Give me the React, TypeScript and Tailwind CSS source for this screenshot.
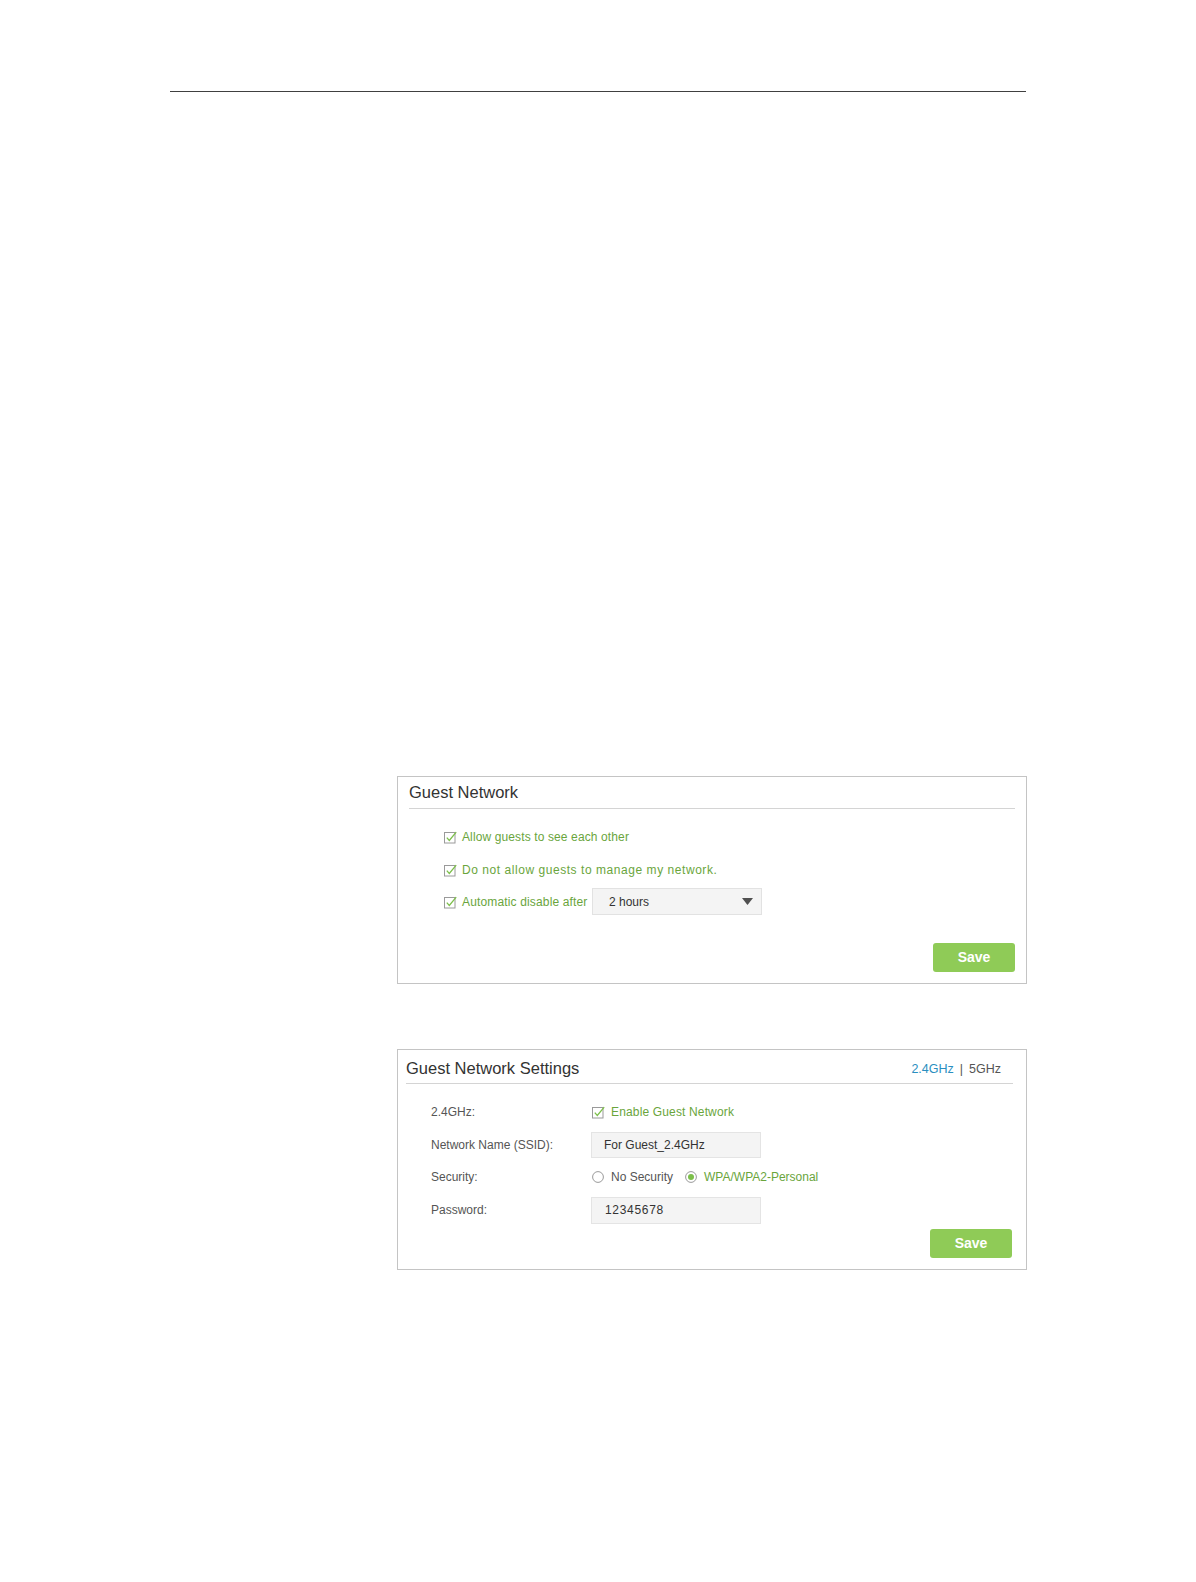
import React from 'react';

const green = 'text-[#6aa53c]';

function CheckIcon() {
  return (
    <svg width="14" height="14" viewBox="0 0 14 14" className="shrink-0">
      <rect x="0.5" y="2.5" width="10.5" height="10.5" fill="white" stroke="#9a9a9a" strokeWidth="1" />
      <polyline points="2.8,7.6 5.3,10.4 12.2,2.2" fill="none" stroke="#7cbf4a" strokeWidth="1.3" />
    </svg>
  );
}

function Radio({ checked }: { checked?: boolean }) {
  return (
    <svg width="12" height="12" viewBox="0 0 12 12" className="shrink-0">
      <circle cx="6" cy="6" r="5.4" fill="white" stroke="#9a9a9a" strokeWidth="1" />
      {checked && <circle cx="6" cy="6" r="3" fill="#7cbf4a" />}
    </svg>
  );
}

function SaveButton() {
  return (
    <button className="w-[82px] h-[29px] rounded-[3px] bg-[#8fcb57] text-white text-[14px] font-semibold">
      Save
    </button>
  );
}

export default function App() {
  return (
    <div className="w-[1196px] h-[1582px] bg-white pt-[91px] font-['Liberation_Sans',Arial,sans-serif]">
      <div className="ml-[170px] w-[856px] h-px bg-[#404040]" />

      {/* Guest Network */}
      <div className="mt-[684px] ml-[397px] w-[630px] h-[208px] border border-[#c4c4c4] flex flex-col">
        <div className="pt-[5px] px-[11px]">
          <div className="h-[20px] leading-[20px] text-[16.5px] text-[#333]">Guest Network</div>
          <div className="mt-[6px] h-px bg-[#d4d4d4]" />
        </div>

        <div className="pl-[46px] mt-[18px] flex flex-col">
          <div className="h-[20px] flex items-center gap-[4px]">
            <CheckIcon />
            <span className={`text-[12px] tracking-[0.12px] ${green}`}>Allow guests to see each other</span>
          </div>
          <div className="mt-[13px] h-[20px] flex items-center gap-[4px]">
            <CheckIcon />
            <span className={`text-[12px] tracking-[0.55px] ${green}`}>Do not allow guests to manage my network.</span>
          </div>
          <div className="mt-[8px] h-[27px] flex items-center">
            <CheckIcon />
            <span className={`ml-[4px] w-[130px] text-[12px] tracking-[0.15px] ${green}`}>Automatic disable after</span>
            <div className="w-[170px] h-[27px] bg-[#f4f4f4] border border-[#e2e2e2] flex items-center justify-between pl-[16px] pr-[8px]">
              <span className="text-[12px] text-[#333]">2 hours</span>
              <svg width="11" height="7" viewBox="0 0 11 7">
                <polygon points="0,0 11,0 5.5,7" fill="#505050" />
              </svg>
            </div>
          </div>
        </div>

        <div className="mt-[28px] pr-[11px] flex justify-end">
          <SaveButton />
        </div>
      </div>

      {/* Guest Network Settings */}
      <div className="mt-[65px] ml-[397px] w-[630px] h-[221px] border border-[#c4c4c4] flex flex-col">
        <div className="pt-[8px] pl-[8px] pr-[13px]">
          <div className="h-[20px] flex items-center justify-between">
            <span className="text-[16.5px] text-[#333]">Guest Network Settings</span>
            <span className="mr-[12px] mt-[2px] text-[12.5px] text-[#555]">
              <span className="text-[#2a8fc0]">2.4GHz</span>
              <span className="mx-[6px]">|</span>
              5GHz
            </span>
          </div>
          <div className="mt-[5px] h-px bg-[#d4d4d4]" />
        </div>

        <div className="pl-[33px] mt-[15px] flex flex-col text-[12px] text-[#555]">
          <div className="h-[26px] flex items-center">
            <span className="w-[160px]">2.4GHz:</span>
            <div className="flex items-center gap-[5px] pl-[1px]">
              <CheckIcon />
              <span className={`tracking-[0.15px] ${green}`}>Enable Guest Network</span>
            </div>
          </div>
          <div className="mt-[7px] h-[26px] flex items-center">
            <span className="w-[160px]">Network Name (SSID):</span>
            <div className="w-[170px] h-[26px] bg-[#f4f4f4] border border-[#e4e4e4] flex items-center pl-[12px] text-[#333]">
              For Guest_2.4GHz
            </div>
          </div>
          <div className="mt-[6px] h-[26px] flex items-center">
            <span className="w-[160px]">Security:</span>
            <div className="flex items-center pl-[1px]">
              <Radio />
              <span className="ml-[7px]">No Security</span>
              <span className="ml-[12px]"><Radio checked /></span>
              <span className={`ml-[7px] ${green}`}>WPA/WPA2-Personal</span>
            </div>
          </div>
          <div className="mt-[7px] h-[26px] flex items-center">
            <span className="w-[160px]">Password:</span>
            <div className="w-[170px] h-[27px] bg-[#f4f4f4] border border-[#e4e4e4] flex items-center pl-[13px] text-[#333] tracking-[0.7px]">
              12345678
            </div>
          </div>
        </div>

        <div className="mt-[6px] pr-[14px] flex justify-end">
          <SaveButton />
        </div>
      </div>
    </div>
  );
}
